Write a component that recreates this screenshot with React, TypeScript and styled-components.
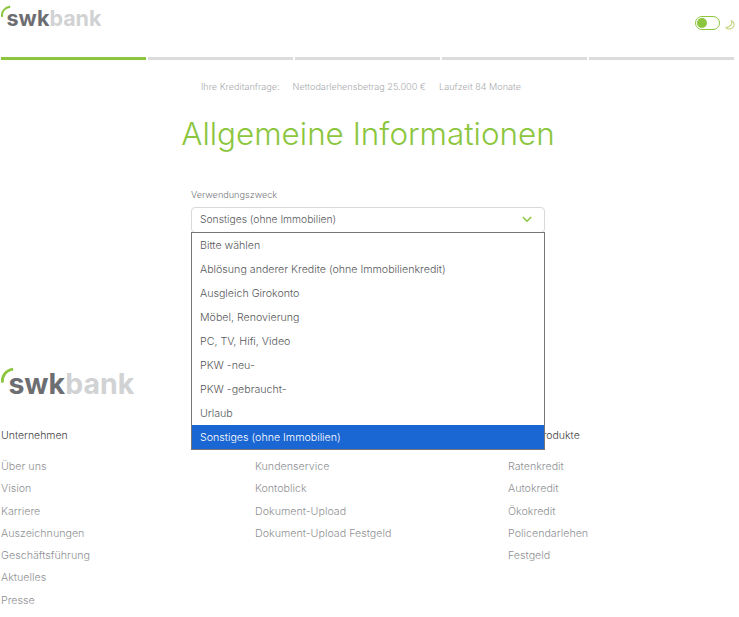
import { createGlobalStyle, styled } from "styled-components";

const GlobalStyle = createGlobalStyle`
  html, body {
    margin: 0;
    padding: 0;
    background: #fff;
    font-family: "Inter", "Liberation Sans", sans-serif;
    font-weight: 300;
  }
  * { box-sizing: border-box; }
`;

const Page = styled.div`
  width: 739px;
  height: 617px;
  overflow: hidden;
`;

const Header = styled.header`
  height: 57px;
  display: flex;
  justify-content: space-between;
  padding: 5px 4px 0 1px;
`;

const LogoWrap = styled.div<{ $size: number }>`
  position: relative;
  display: inline-block;
  padding-left: ${(p) => p.$size * 0.26}px;
  padding-top: ${(p) => p.$size * 0.12}px;
  font-family: "Inter", sans-serif;
  font-size: ${(p) => p.$size}px;
  font-weight: 700;
  line-height: 1;
  height: fit-content;
  color: #6d6e71;
  svg {
    position: absolute;
    left: 0;
    top: 0;
    width: ${(p) => p.$size * 0.5}px;
    height: ${(p) => p.$size * 0.6}px;
  }
  span {
    color: #d1d2d4;
  }
`;

const ThemeToggle = styled.div`
  display: flex;
  align-items: flex-end;
  gap: 5px;
  height: 14px;
  margin-top: 11px;
`;

const ToggleTrack = styled.div`
  width: 25px;
  height: 14px;
  border: 1.5px solid #8cc63f;
  border-radius: 7px;
  padding: 0.5px 0 0 0.5px;
  &::before {
    content: "";
    display: block;
    width: 10px;
    height: 10px;
    border-radius: 50%;
    background: #8cc63f;
  }
`;

const Progress = styled.div`
  display: flex;
  gap: 2px;
  padding: 0 5px 0 1px;
`;

const Step = styled.div<{ $active?: boolean }>`
  flex: 1;
  height: 3px;
  background: ${(p) => (p.$active ? "#8cc63f" : "#dcdcdc")};
`;

const Summary = styled.div`
  display: flex;
  justify-content: center;
  gap: 13px;
  margin-top: 20px;
  padding-right: 17px;
  font-size: 9.15px;
  line-height: 13px;
  color: #a9abae;
`;

const Title = styled.h1`
  margin: 19px 0 0;
  padding-right: 3px;
  text-align: center;
  font-size: 31.4px;
  line-height: 44px;
  font-weight: 300;
  color: #8cc63f;
`;

const Form = styled.div`
  width: 354px;
  margin: 32px 0 0 191px;
`;

const FieldLabel = styled.label`
  display: block;
  font-size: 9.15px;
  line-height: 13px;
  color: #77787b;
`;

const SelectWrap = styled.div`
  position: relative;
  margin-top: 6px;
`;

const SelectBox = styled.div`
  height: 26px;
  display: flex;
  align-items: center;
  justify-content: space-between;
  padding: 0 12px 2px 8px;
  border: 1px solid #d9d9d9;
  border-radius: 4px;
  font-size: 10.3px;
  color: #58595b;
`;

const OptionList = styled.ul`
  position: absolute;
  z-index: 5;
  top: 25px;
  left: 0;
  right: 0;
  margin: 0;
  padding: 0;
  list-style: none;
  background: #fff;
  border: 1px solid #767676;
`;

const Option = styled.li<{ $selected?: boolean }>`
  height: 24px;
  padding: 1px 0 0 8px;
  font-size: 10.65px;
  line-height: 24px;
  color: ${(p) => (p.$selected ? "#fff" : "#58595b")};
  background: ${(p) => (p.$selected ? "#1a66d3" : "transparent")};
`;

const Footer = styled.footer`
  margin-top: 134px;
  padding-left: 1px;
`;

const FooterColumns = styled.div`
  display: grid;
  grid-template-columns: 254px 253px 1fr;
  margin-top: 29px;
`;

const ColumnTitle = styled.div`
  font-size: 10.5px;
  line-height: 15px;
  color: #414042;
  margin-bottom: 13px;
`;

const FooterLink = styled.a`
  display: block;
  font-size: 10.7px;
  line-height: 22.3px;
  color: #8f9194;
`;

const Arc = () => (
  <svg viewBox="0 0 20 24" aria-hidden="true">
    <path d="M2 22C1 13 6 5 17 3" fill="none" stroke="#8cc63f" strokeWidth="4" />
  </svg>
);

const Logo = ({ size }: { size: number }) => (
  <LogoWrap $size={size}>
    <Arc />
    swk<span>bank</span>
  </LogoWrap>
);

const options = [
  "Bitte wählen",
  "Ablösung anderer Kredite (ohne Immobilienkredit)",
  "Ausgleich Girokonto",
  "Möbel, Renovierung",
  "PC, TV, Hifi, Video",
  "PKW -neu-",
  "PKW -gebraucht-",
  "Urlaub",
  "Sonstiges (ohne Immobilien)",
];

const columns = [
  { title: "Unternehmen", links: ["Über uns", "Vision", "Karriere", "Auszeichnungen", "Geschäftsführung", "Aktuelles", "Presse"] },
  { title: "Service", links: ["Kundenservice", "Kontoblick", "Dokument-Upload", "Dokument-Upload Festgeld"] },
  { title: "Kreditprodukte", links: ["Ratenkredit", "Autokredit", "Ökokredit", "Policendarlehen", "Festgeld"] },
];

export default function App() {
  return (
    <Page>
      <GlobalStyle />
      <Header>
        <Logo size={21.5} />
        <ThemeToggle>
          <ToggleTrack />
          <svg width="10" height="10" viewBox="0 0 10 10" aria-hidden="true">
            <path d="M6.5 0.8C7.6 4 5.5 7 1 7.6C3 9.8 7.6 9.4 8.8 5.8C9.4 3.8 8.4 1.8 6.5 0.8Z" fill="none" stroke="#c5d37a" strokeWidth="1.1" />
          </svg>
        </ThemeToggle>
      </Header>
      <Progress>
        <Step $active />
        <Step />
        <Step />
        <Step />
        <Step />
      </Progress>
      <Summary>
        <span>Ihre Kreditanfrage:</span>
        <span>Nettodarlehensbetrag 25.000 €</span>
        <span>Laufzeit 84 Monate</span>
      </Summary>
      <Title>Allgemeine Informationen</Title>
      <Form>
        <FieldLabel>Verwendungszweck</FieldLabel>
        <SelectWrap>
          <SelectBox>
            Sonstiges (ohne Immobilien)
            <svg width="10" height="7" viewBox="0 0 10 7" aria-hidden="true">
              <path d="M0.8 1L5 5.2L9.2 1" fill="none" stroke="#8cc63f" strokeWidth="1.6" />
            </svg>
          </SelectBox>
          <OptionList>
            {options.map((o) => (
              <Option key={o} $selected={o === "Sonstiges (ohne Immobilien)"}>
                {o}
              </Option>
            ))}
          </OptionList>
        </SelectWrap>
      </Form>
      <Footer>
        <Logo size={28.5} />
        <FooterColumns>
          {columns.map((c) => (
            <div key={c.title}>
              <ColumnTitle>{c.title}</ColumnTitle>
              {c.links.map((l) => (
                <FooterLink key={l}>{l}</FooterLink>
              ))}
            </div>
          ))}
        </FooterColumns>
      </Footer>
    </Page>
  );
}
